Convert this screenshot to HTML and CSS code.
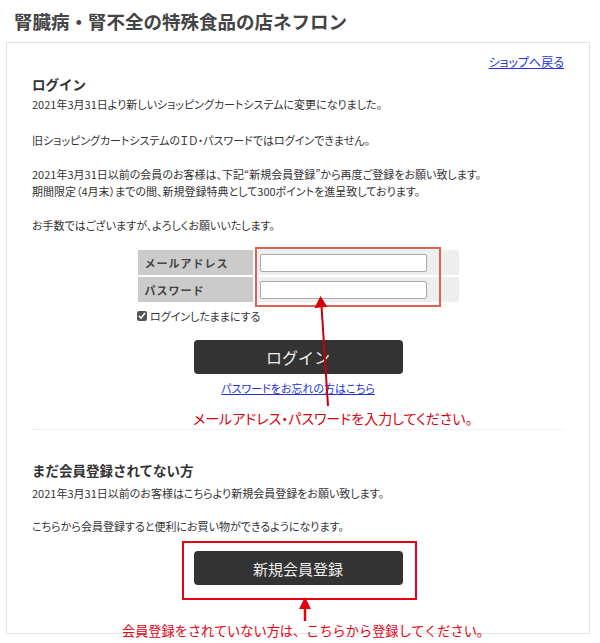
FILE: index.html
```html
<!DOCTYPE html>
<html lang="ja">
<head>
    <meta charset="UTF-8">
    <meta name="viewport" content="width=device-width, initial-scale=1.0">
    <title>ログイン | ネフロン</title>
    <link rel="stylesheet" href="styles.css">
</head>
<body>
<div class="page">
    <h1 class="site-title">腎臓病・腎不全の特殊食品の店ネフロン</h1>

    <div class="panel">
        <div class="back"><a href="#">ショップへ戻る</a></div>

        <h2>ログイン</h2>
        <p class="first">2021年3月31日より新しいショッピングカートシステムに変更になりました。</p>
        <p class="gap">旧ショッピングカートシステムのＩＤ・パスワードではログインできません。</p>
        <p>2021年3月31日以前の会員のお客様は、下記“新規会員登録”から再度ご登録をお願い致します。<br>期間限定（4月末）までの間、新規登録特典として300ポイントを進呈致しております。</p>
        <p>お手数ではございますが、よろしくお願いいたします。</p>

        <form class="login-form">
            <div class="fields">
                <label class="field-label" for="email">メールアドレス</label>
                <div class="field-input"><input type="text" id="email"></div>
                <label class="field-label" for="pass">パスワード</label>
                <div class="field-input"><input type="password" id="pass"></div>
            </div>
            <label class="keep"><input type="checkbox" checked> ログインしたままにする</label>
            <button type="submit" class="btn btn-login">ログイン</button>
            <div class="forgot"><a href="#">パスワードをお忘れの方はこちら</a></div>
        </form>

        <hr class="divider">

        <div class="register">
            <h2>まだ会員登録されてない方</h2>
            <p class="first">2021年3月31日以前のお客様はこちらより新規会員登録をお願い致します。</p>
            <p>こちらから会員登録すると便利にお買い物ができるようになります。</p>
            <div class="center"><button type="button" class="btn">新規会員登録</button></div>
        </div>
    </div>

    <!-- annotations drawn over the screenshot -->
    <svg class="notes" width="600" height="643" viewBox="0 0 600 643">
        <rect x="256" y="248" width="184" height="58" fill="none" stroke="#e2604f" stroke-width="2"/>
        <line x1="328" y1="406" x2="321.5" y2="306" stroke="#c8000a" stroke-width="2"/>
        <polygon points="320.5,296 314.5,308 327.5,307" fill="#d4000a"/>
        <rect x="183" y="542" width="233" height="57" fill="none" stroke="#e60012" stroke-width="2"/>
        <line x1="305" y1="621" x2="305" y2="606" stroke="#e60012" stroke-width="2.5"/>
        <polygon points="305,597 299,609 311,609" fill="#e60012"/>
    </svg>
    <div class="note note-login">メールアドレス・パスワードを入力してください。</div>
    <div class="note note-register">会員登録をされていない方は、こちらから登録してください。</div>
</div>
</body>
</html>
```

FILE: styles.css
```css
body {
    margin: 0;
    background-color: #fff;
    font-family: "Noto Sans CJK JP", "Noto Sans", sans-serif;
    color: #333;
}
.page {
    position: relative;
    width: 600px;
    height: 643px;
    overflow: hidden;
}
.site-title {
    margin: 0;
    padding: 10px 14px;
    font-size: 18.5px;
    line-height: 22px;
    font-weight: bold;
    color: #444;
}
.panel {
    margin-left: 6px;
    width: 584px;
    height: 592px;
    padding: 0 25px;
    box-sizing: border-box;
    border: 1px solid #e3e3e3;
}
.back {
    padding-top: 11px;
    text-align: right;
    font-size: 12px;
    line-height: 16px;
    font-feature-settings: "palt";
}
a {
    color: #2233dd;
}
h2 {
    margin: 5px 0 0;
    font-size: 13.5px;
    line-height: 18px;
    font-weight: bold;
    color: #333;
}
p {
    margin: 17px 0 0;
    font-size: 11px;
    line-height: 17px;
    font-feature-settings: "palt";
}
p.first {
    margin-top: 3px;
}
p.gap {
    margin-top: 19px;
}
.login-form {
    margin-top: 16px;
    display: flex;
    flex-direction: column;
    align-items: center;
}
.fields {
    display: grid;
    grid-template-columns: 115px 204px;
    grid-auto-rows: 25px;
    gap: 2px;
}
.field-label {
    background-color: #cbcbcb;
    color: #444;
    font-size: 11px;
    font-weight: bold;
    padding-left: 7px;
    display: flex;
    align-items: center;
    letter-spacing: 1px;
}
.field-input {
    background-color: #eee;
    display: flex;
    align-items: center;
    padding-left: 5px;
}
.field-input input {
    width: 167px;
    height: 18px;
    box-sizing: border-box;
    border: 1px solid #a9a9a9;
    border-radius: 2px;
    background: #fff;
    padding: 0 3px;
}
.keep {
    align-self: flex-start;
    margin: 6px 0 0 105px;
    font-size: 11px;
    line-height: 16px;
    display: flex;
    align-items: center;
    gap: 3px;
    font-feature-settings: "palt";
}
.keep input {
    width: 10px;
    height: 10px;
    margin: 0;
    accent-color: #555;
}
.btn {
    margin-top: 16px;
    width: 209px;
    height: 34px;
    border: none;
    border-radius: 4px;
    background-color: #333;
    color: #eee;
    font-family: inherit;
    font-size: 15px;
    cursor: pointer;
}
.btn-login {
    font-size: 16px;
}
.forgot {
    margin-top: 6px;
    font-size: 11px;
    line-height: 16px;
    font-feature-settings: "palt";
}
.divider {
    margin: 33px 0 0;
    border: none;
    border-top: 1px dotted #e4e4e4;
}
.register h2 {
    margin-top: 31px;
}
.register p.first {
    margin-top: 6px;
}
.register p {
    margin-top: 16px;
}
.center {
    display: flex;
    justify-content: center;
}
.center .btn {
    margin-top: 16px;
}
.notes {
    position: absolute;
    left: 0;
    top: 0;
    pointer-events: none;
}
.note {
    position: absolute;
    color: #e60012;
    font-size: 14px;
    line-height: 18px;
    white-space: nowrap;
}
.note-login {
    left: 193px;
    top: 409px;
    color: #d9000d;
    font-feature-settings: "palt";
}
.note-register {
    left: 122px;
    top: 622px;
    font-size: 13.2px;
}
```
